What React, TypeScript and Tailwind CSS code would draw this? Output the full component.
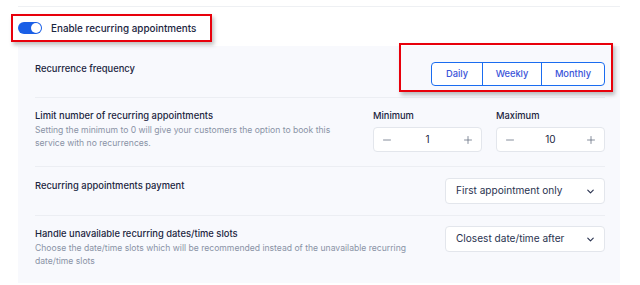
import { Minus, Plus, ChevronDown } from "lucide-react";

const Stepper = ({ label, value }: { label: string; value: string }) => {
  return (
    <div className="flex w-[109px] flex-col">
      <span className="text-[9.3px] leading-[14px] font-medium text-[#1b2540]">{label}</span>
      <div className="mt-[4px] flex h-[25px] items-center justify-between rounded-[4px] border border-[#e3e6ec] bg-white px-[7px]">
        <Minus className="h-[12px] w-[12px] text-[#5f687c]" strokeWidth={1.5} />
        <span className="text-[10px] text-[#1b2540]">{value}</span>
        <Plus className="h-[12px] w-[12px] text-[#5f687c]" strokeWidth={1.5} />
      </div>
    </div>
  );
};

const Select = ({ value }: { value: string }) => {
  return (
    <div className="flex h-[26px] w-[160px] items-center justify-between rounded-[4px] border border-[#e3e6ec] bg-white pl-[10px] pr-[8px]">
      <span className="text-[10.1px] text-[#2a3350]">{value}</span>
      <ChevronDown className="h-[11px] w-[11px] text-[#2a3350]" strokeWidth={2.5} />
    </div>
  );
};

export default function App() {
  const options = ["Daily", "Weekly", "Monthly"];

  return (
    <div
      className="h-[285px] w-[640px] overflow-hidden bg-white"
      style={{ fontFamily: "Inter, 'Noto Sans', sans-serif" }}
    >
      <div className="pl-[18px] pr-[20px] pt-[6px]">
        <div className="border-t border-[#eef0f3]" />
      </div>

      {/* Toggle header */}
      <div className="pl-[11px] pt-[7px]">
        <div className="inline-flex h-[28px] w-[201px] items-center border-2 border-[#e8000b] pl-[5px] shadow-[2px_3px_4px_rgba(0,0,0,0.25)]">
          <div className="flex h-[12px] w-[24px] items-center justify-end rounded-full bg-[#1a5fe6] px-[1.5px]">
            <div className="h-[9.5px] w-[9.5px] rounded-full bg-white" />
          </div>
          <span className="ml-[9px] text-[9.9px] font-medium text-[#1b2540]">
            Enable recurring appointments
          </span>
        </div>
      </div>

      {/* Settings panel */}
      <div className="ml-[18px] mr-[20px] mt-[4px] h-[237px] bg-[#f8f9fd] pl-[17px] pr-[15px]">
        {/* Recurrence frequency */}
        <div className="relative flex items-start justify-between border-b border-[#eceef3] pb-[11px] pt-[16px]">
          <span className="text-[9.4px] leading-[14px] font-medium text-[#1b2540]">
            Recurrence frequency
          </span>
          <div className="flex h-[24px] overflow-hidden rounded-[4px] border border-[#1a6cf0] bg-white">
            {options.map((o, i) => (
              <div
                key={o}
                className={`flex items-center justify-center text-[9.3px] font-medium text-[#3b54d9] ${
                  i === 0 ? "w-[50px]" : i === 1 ? "w-[59px] border-l border-[#1a6cf0]" : "w-[63px] border-l border-[#1a6cf0]"
                }`}
              >
                {o}
              </div>
            ))}
          </div>
          <div className="pointer-events-none absolute right-[-8px] top-[-3px] h-[49px] w-[214px] border-2 border-[#e8000b] shadow-[2px_3px_4px_rgba(0,0,0,0.25)]" />
        </div>

        {/* Limit number */}
        <div className="flex items-start justify-between border-b border-[#eceef3] pb-[14px] pt-[11px]">
          <div className="w-[315px]">
            <div className="text-[9.4px] leading-[14px] font-medium text-[#1b2540]">
              Limit number of recurring appointments
            </div>
            <div className="mt-[1px] text-[8.6px] leading-[12.5px] text-[#8a93a6]">
              Setting the minimum to 0 will give your customers the option to book this service with no
              recurrences.
            </div>
          </div>
          <div className="flex gap-[14px]">
            <Stepper label="Minimum" value="1" />
            <Stepper label="Maximum" value="10" />
          </div>
        </div>

        {/* Payment */}
        <div className="flex items-start justify-between border-b border-[#eceef3] pb-[11px] pt-[11px]">
          <span className="pt-[1px] text-[9.4px] leading-[14px] font-medium text-[#1b2540]">
            Recurring appointments payment
          </span>
          <Select value="First appointment only" />
        </div>

        {/* Unavailable slots */}
        <div className="flex items-start justify-between pt-[10px]">
          <div className="w-[380px]">
            <div className="pt-[1px] text-[9.4px] leading-[14px] font-medium text-[#1b2540]">
              Handle unavailable recurring dates/time slots
            </div>
            <div className="mt-[1px] text-[8.6px] leading-[13px] text-[#8a93a6]">
              Choose the date/time slots which will be recommended instead of the unavailable recurring
              date/time slots
            </div>
          </div>
          <Select value="Closest date/time after" />
        </div>
      </div>
    </div>
  );
}
